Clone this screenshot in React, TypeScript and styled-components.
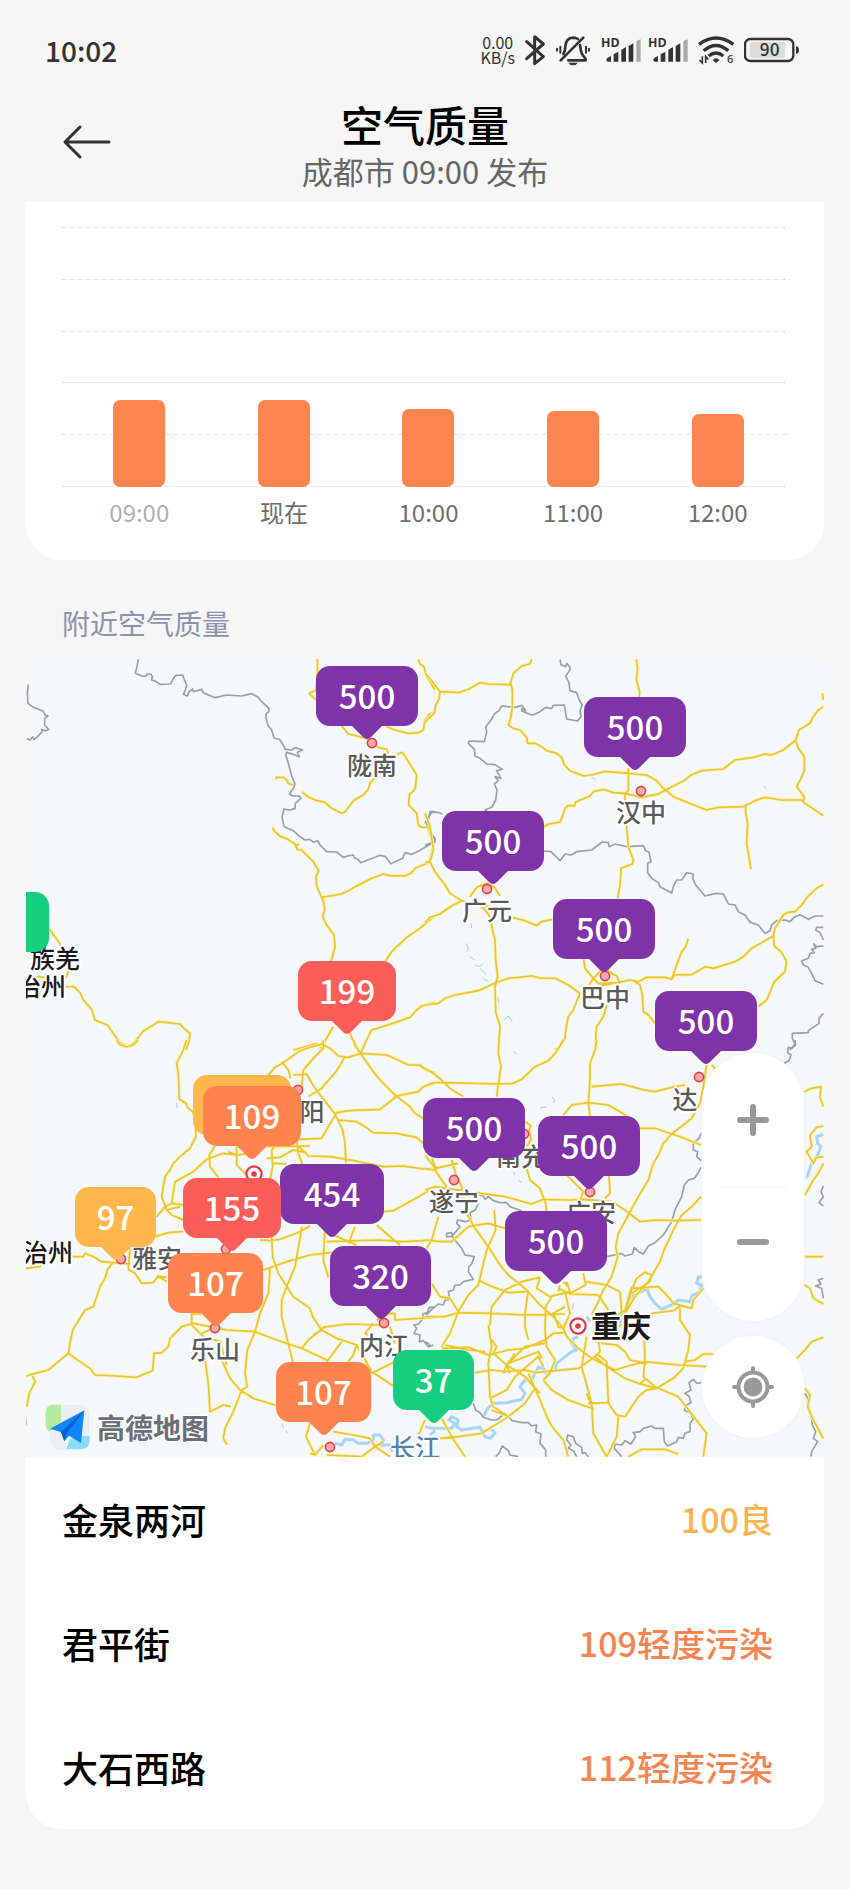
import React from "react";
import styled, { createGlobalStyle } from "styled-components";

const GlobalStyle = createGlobalStyle`
  *, *::before, *::after { box-sizing: border-box; }
  body {
    margin: 0;
    background: #f6f6f6;
    color: #000;
    font-family: "Noto Sans CJK SC", "Noto Sans", sans-serif;
  }
  h1, h2, p, ul { margin: 0; padding: 0; font-weight: inherit; }
  ul { list-style: none; }
  button { border: 0; padding: 0; background: none; font: inherit; cursor: pointer; }
`;

const Page = styled.div`
  min-height: 100vh;
  background: #f6f6f6;
`;

/* ---------- status bar ---------- */

const StatusBar = styled.div`
  display: flex;
  align-items: center;
  justify-content: space-between;
  height: 100px;
  padding: 0 50px 0 45px;
  color: #333;
`;

const Clock = styled.time`
  font-size: 28px;
  line-height: 32px;
  font-weight: 500;
`;

const StatusIcons = styled.div`
  display: flex;
  align-items: center;
  gap: 10px;
`;

const SignalPair = styled.div`
  display: flex;
  gap: 7px;
`;

const NetSpeed = styled.div`
  font-size: 16px;
  line-height: 15px;
  text-align: center;
`;

function Bluetooth() {
  return (
    <svg width="20" height="32" viewBox="298 101 60 96" aria-label="蓝牙">
      <path
        d="M303 124L353 169L327 190V109L353 131L303 175"
        fill="none" stroke="#333" strokeWidth="9" strokeLinejoin="round" strokeLinecap="round"
      />
    </svg>
  );
}

function BellOff() {
  return (
    <svg width="36" height="32" viewBox="392 101 108 96" aria-label="静音">
      <g fill="none" stroke="#333" strokeWidth="8" strokeLinecap="round">
        <path d="M409 180L477 112" />
        <path d="M417 161Q423 152 423 138Q425 113 446 112Q455 112 461 116" />
        <path d="M467 134Q469 152 473 161L484 176V180H432" strokeLinejoin="round" />
        <path d="M408 139V157M398 145V151M485 139V157M494 145V151" strokeWidth="6" />
      </g>
      <path d="M432 187H460Q456 195 446 195Q436 195 432 187Z" fill="#333" />
    </svg>
  );
}

function Signal() {
  return (
    <svg width="40" height="28" viewBox="525 108 120 84" aria-label="信号">
      <text x="525" y="141" fontSize="37" fontWeight="700" fontFamily="Open Sans, sans-serif" fill="#333">HD</text>
      <g fill="#333">
        <path d="M541 179Q541 174 555 168V185H547Q541 185 541 179Z" />
        <path d="M563 163L577 155V185H563Z" />
        <path d="M586 149L600 141V185H586Z" />
        <path d="M608 138L622 130V185H608Z" />
        <path d="M631 125Q631 122 644 118V185H631Z" fill="#aaa" />
      </g>
    </svg>
  );
}

function Wifi() {
  return (
    <svg width="36" height="32" viewBox="816 105 108 96" aria-label="无线网络">
      <g fill="none" stroke="#333" strokeWidth="10">
        <path d="M819 136Q870 98 922 136" />
        <path d="M833 155Q870 124 907 155" />
        <path d="M848 171Q870 153 892 171" />
      </g>
      <path d="M860 183Q870 173 881 183L870 192Z" fill="#333" />
      <path d="M829 172V192L820 183M839 192V172L847 181" fill="none" stroke="#333" strokeWidth="5" />
      <text x="903" y="193" fontSize="33" fontWeight="600" fontFamily="Open Sans, sans-serif" fill="#444">6</text>
    </svg>
  );
}

function Battery() {
  return (
    <svg width="56" height="26" viewBox="959 112 168 78" aria-label="电量">
      <rect x="962" y="118" width="145" height="66" rx="16" fill="none" stroke="#333" strokeWidth="7" />
      <rect x="976" y="127" width="106" height="48" rx="6" fill="#dcdcdc" />
      <path d="M1115 139Q1124 141 1124 151Q1124 161 1115 163Z" fill="#333" />
      <text x="1036" y="169" textAnchor="middle" fontSize="52" fontWeight="500" fontFamily="Noto Sans CJK SC, sans-serif" fill="#333">90</text>
    </svg>
  );
}

/* ---------- title ---------- */

const Header = styled.header`
  display: grid;
  grid-template-columns: 1fr auto 1fr;
  align-items: start;
  height: 102px;
  padding: 0 62px;
`;

const BackButton = styled.button`
  justify-self: start;
  display: flex;
  padding-top: 24px;
`;

const Titles = styled.div`
  text-align: center;
`;

const Title = styled.h1`
  font-size: 42px;
  line-height: 48px;
  font-weight: 500;
`;

const Published = styled.p`
  font-size: 31px;
  line-height: 46px;
  color: #666;
`;

/* ---------- forecast chart ---------- */

const Main = styled.main`
  padding: 0 26px 60px;
`;

const ChartCard = styled.section`
  padding: 25px 34px 32px 35px;
  background: #fff;
  border-radius: 0 0 36px 36px;
`;

const Plot = styled.div`
  display: grid;
`;

const GridLines = styled.div`
  grid-area: 1 / 1;
  display: flex;
  flex-direction: column;
  justify-content: space-between;
`;

const GridLine = styled.span`
  height: 1px;
  background: repeating-linear-gradient(90deg, #e2e2e2 0 5px, transparent 5px 8px);
`;

const Bars = styled.ul`
  grid-area: 1 / 1;
  display: grid;
  grid-template-columns: repeat(5, 1fr);
  align-items: end;
  justify-items: center;
  height: 260px;
  padding-left: 6px;
`;

const Bar = styled.li<{ $height: number }>`
  width: 52px;
  height: ${(p) => p.$height}px;
  border-radius: 7px;
  background: #ff8550;
`;

const Hours = styled.ul`
  display: grid;
  grid-template-columns: repeat(5, 1fr);
  padding: 9px 0 0 6px;
  text-align: center;
  font-size: 24px;
  line-height: 32px;
`;

const Hour = styled.li<{ $past?: boolean }>`
  color: ${(p) => (p.$past ? "#b0b0b0" : "#6e6e6e")};
`;

const SectionTitle = styled.h2`
  padding: 42px 36px 15px;
  font-size: 28px;
  line-height: 42px;
  color: #8c91ae;
`;

/* ---------- map ---------- */

const MAP_X = 26;
const MAP_Y = 659;
const MAP_SIZE = 798;
const pct = (v: number, origin: number) => `${((v - origin) / MAP_SIZE) * 100}%`;

const MapBox = styled.div`
  position: relative;
  aspect-ratio: 1;
  overflow: hidden;
  background: #f4f8fb;
`;

const MapSvg = styled.svg`
  display: block;
  width: 100%;
  height: 100%;
`;

const Place = styled.span<{ $x: number; $y: number; $kind?: Kind }>`
  position: absolute;
  left: ${(p) => pct(p.$x, MAP_X)};
  top: ${(p) => pct(p.$y, MAP_Y)};
  transform: translate(-50%, -50%);
  white-space: nowrap;
  font-size: ${(p) => (p.$kind === "big" ? 30 : 25)}px;
  line-height: 32px;
  font-weight: ${(p) => (p.$kind === "big" ? 700 : 500)};
  color: ${(p) => (p.$kind === "river" ? "#4f83b3" : p.$kind ? "#1a1a1a" : "#5a5a5a")};
  text-shadow: 2px 0 #fff, -2px 0 #fff, 0 2px #fff, 0 -2px #fff, 1px 1px #fff, -1px -1px #fff;
`;

const Pin = styled.button<{ $x: number; $y: number; $w: number; $color: string }>`
  position: absolute;
  left: ${(p) => pct(p.$x, MAP_X)};
  top: ${(p) => pct(p.$y, MAP_Y)};
  width: ${(p) => p.$w}px;
  height: 60px;
  border-radius: 14px;
  background: ${(p) => p.$color};
  color: #fff;
  font-size: 33px;
  line-height: 58px;
  padding-bottom: 2px;
  font-weight: 500;
  text-align: center;
`;

const PinTail = styled.svg`
  position: absolute;
  left: 50%;
  top: 59px;
  margin-left: -16px;
`;

const Controls = styled.div`
  position: absolute;
  right: 20px;
  bottom: 19px;
  display: flex;
  flex-direction: column;
  gap: 15px;
  width: 102px;
`;

const ZoomPill = styled.div`
  display: flex;
  flex-direction: column;
  align-items: center;
  padding: 0 0 26px;
  border-radius: 51px;
  background: #fff;
  box-shadow: 0 0 3px rgba(0, 0, 0, 0.05);
`;

const ZoomButton = styled.button`
  display: flex;
  align-items: center;
  justify-content: center;
  width: 68px;
  height: 108px;
  &:first-child {
    height: 134px;
  }
  & + & { border-top: 1px solid #f2f2f2; }
`;

const LocateButton = styled.button`
  display: flex;
  align-items: center;
  justify-content: center;
  height: 102px;
  border-radius: 50%;
  background: #fff;
  box-shadow: 0 0 3px rgba(0, 0, 0, 0.05);
`;

const Brand = styled.div`
  position: absolute;
  left: 19px;
  bottom: 7px;
  display: flex;
  align-items: center;
  gap: 6px;
  font-size: 28px;
  line-height: 44px;
  font-weight: 700;
  color: #6a7076;
  text-shadow: 1px 0 #fff, -1px 0 #fff, 0 1px #fff, 0 -1px #fff;
`;

/* Vector tiles: each covers a quadrant, drawn in thirds of a map unit. */
interface Tile {
  id: string;
  x: number;
  y: number;
  roads: string;
  borders: string;
  rivers: string;
  creeks?: string;
}

const TILES: Tile[] = [
  {
    id: "nw", x: 20, y: 650,
    roads: `M892 28L893 60L888 120L868 130L888 150M1195 28L1200 42L1212 50L1218 75L1245 120M1245 185L1228 193L1215 210L1210 240L1195 248L1165 250L1125 240L1100 230
      M965 228L985 252L1040 265L1075 292L1100 297L1105 312M1130 312L1148 308L1165 335L1190 375L1186 415L1168 435L1166 465L1190 490L1195 525L1205 532L1225 532L1232 560L1240 590L1230 620L1232 640L1245 668
      M766 388L770 382L790 382L800 390L804 400L820 406M846 426L860 438L885 450L915 457L935 475L965 490L975 486L1000 452L1030 435L1045 418L1050 400L1062 386
      M757 533L765 545L782 560L800 566L825 582L832 598L845 600L880 635L896 662L888 680L890 708L905 742L912 758L914 780L908 800L920 825L942 855L945 890L933 935
      M825 590L838 582M905 742L930 738L965 732L985 722L1010 708L1055 685L1090 672L1110 677L1155 678L1175 668L1185 655L1232 635M1095 935L1115 905L1160 862L1200 835L1245 797
      M88 838L105 860L122 885M146 960L138 985M50 980L78 982M138 1010L162 1010L180 1028L190 1050L215 1078L225 1110L262 1125L280 1150L300 1178L325 1191L345 1175L370 1143L400 1125L415 1115L480 1122L492 1135L510 1150L508 1170L498 1200
      M1245 1057L1205 1068L1190 1080L1170 1102L1110 1123L1055 1140L1025 1200M940 1130L905 1190L900 1200M990 1150L1000 1175L1015 1200M820 1200L885 1182L912 1185L930 1195`,
    borders: `M355 28L352 45L346 70L368 79L378 78L382 72L392 72L397 80L395 90L405 93L420 103L452 102L460 85L468 76L488 75L494 92L500 105L496 120L490 133L502 138L508 125L518 117L520 125L545 118L550 128L585 143L620 135L665 138L695 131L715 142L722 152L747 175L746 185L738 192L738 205L745 228L755 240L762 264L778 268L790 285L795 298L815 300L825 293L848 300L832 307L838 320L822 314L800 307L797 315L805 340L815 378L825 402L820 415L808 432L818 438L838 438L843 445L826 460L825 476L808 480L792 477L786 500L792 530L810 538L820 542L835 556L855 570L870 568L880 577L893 572L900 585L920 605L950 606L970 622L983 618L1000 615L1005 625L1014 628L1022 638L1080 616L1097 620L1112 641L1148 625L1155 608L1175 613L1195 604L1215 592L1245 575
      M25 103L22 130L24 160L40 172L70 184L75 195L84 198L74 205L74 225L86 238L76 243L65 238L66 246L50 262L42 268L38 261L30 270L20 266M1245 485L1230 485L1226 508L1218 512L1222 528L1232 545L1245 570`,
    rivers: "",
  },
  {
    id: "ne", x: 425, y: 650,
    roads: `M0 68L20 92L45 125L75 126L100 128L130 118L165 98L190 102L255 104L265 70L290 48L315 42L320 28M45 125L42 148L32 165L28 190L10 205L0 218
      M258 102L262 120L262 170L258 200L250 225L265 235L285 240L305 262L308 280L330 280L350 290L365 302L395 310L410 322L418 345L435 362L475 378L500 375L540 364L610 370L665 375L695 392L715 415L745 440L790 458L845 480L880 472L955 470L990 452L1020 442L1070 450L1130 450L1140 460L1195 497
      M634 28L638 55L634 90L644 125L642 145M610 355L610 420L600 432L600 450M604 525L608 560L610 590L625 630L622 642L588 655L586 700L578 745
      M355 532L372 522L405 516L412 500L420 475L430 466L448 468L452 456L495 438L505 425L535 418L565 428L600 430L650 442L700 432L780 390L800 374L830 362L895 357L910 345L930 330L985 322L1020 312L1040 315L1075 300L1112 270L1122 240L1155 220L1162 205L1178 182L1195 170
      M1112 273L1120 295L1138 320L1138 362L1128 385L1115 410L1138 440L1135 455M962 470L962 490L968 520L965 580L978 658
      M0 490L15 530L22 575L25 600L15 635L30 665L60 705L75 730L110 752L80 768L45 792L15 802L0 818M110 752L140 762L195 770M0 637L15 635
      M135 740L155 712L185 700L208 712L225 738M170 770L180 780L195 800L205 850L210 870L212 930L218 980L210 1010L212 1085L225 1130L220 1200M262 802L300 812L335 827L350 815L382 808
      M0 1065L40 1060L60 1045L90 1035L160 1022L215 997L250 985L320 978L345 984L390 985L430 1005L465 1030L445 1080L430 1100L425 1125L420 1165L405 1190L390 1200
      M476 928L480 955L505 985L490 1010M545 1065L535 1100L515 1130L512 1155L514 1200M530 960L505 985L520 1000L540 1000L580 998L615 990L640 995L665 982L722 982L740 988L748 975L800 974L840 950L865 955L930 935L955 920L980 895L1045 858L1050 835L1075 795L1085 788L1110 785L1130 765L1150 738L1175 715L1195 703
      M790 866L782 890L770 905L755 945L740 988M1045 858L1048 888L1068 905L1085 935L1080 965L1048 995L1040 1015L1025 1050L1000 1070M625 992L645 1005L652 1035L655 1085L670 1095L690 1120M545 960L575 978L585 1000M560 1002L500 1010M1192 130L1195 150`,
    borders: `M405 28L408 44L422 50L425 40L435 52L435 60L422 78L432 98L435 122L455 128L463 150L472 165L465 182L468 200L458 213L425 207L418 165L385 166L380 176L362 172L345 185L322 196L290 183L290 176L302 182L290 166L270 172L230 168L222 182L208 192L200 208L182 230L185 245L178 275L160 274L132 273L130 280L148 298L150 318L165 325L185 342L210 344L232 358L215 362L228 385L210 380L220 392L208 402L216 420L212 450L200 472L180 480L192 488
      M355 603L378 605L405 632L420 612L438 615L455 605L500 600L532 576L550 578L552 590L570 582L605 590L655 587L662 602L672 606L678 635L668 640L668 668L680 685L700 698L705 710L740 729L745 710L755 690L770 690L785 668L805 672L803 685L812 705L825 720L840 738L860 733L875 730L895 732L910 762L930 765L940 785L960 795L975 817L1000 825L1020 850L1035 842L1040 825L1055 812L1080 810L1095 815L1110 800L1125 794L1150 808L1170 798L1195 798
      M1195 832L1175 832L1172 840L1185 848L1195 870M1195 888L1175 890L1166 882L1172 895L1160 898L1168 908L1155 910L1150 925L1130 932L1135 945L1148 950L1160 970L1170 992L1195 1003M1195 1090L1182 1105L1182 1120L1168 1130L1150 1142L1150 1148L1102 1150L1102 1165L1110 1182L1095 1200M0 520L20 487L38 487L52 492M0 585L30 575L30 565L20 555`,
    rivers: "",
    creeks: "M138 820L140 835M125 880L130 900L126 905M135 920L150 930M150 945L165 950L175 940M165 955L185 975M175 985L190 995M218 1040L222 1060M238 1110L250 1098L262 1115M500 383L512 388M1018 408L1025 418",
  },
  {
    id: "sw", x: 20, y: 1040,
    roads: `M290 0L300 14L320 21L340 14L355 0M500 0L490 30L470 70L475 100L478 178L498 190L502 202L518 215L526 240L528 290L510 325L480 350L460 370L450 390L435 410L425 470L440 510L455 525L490 540
      M745 105L765 82L790 68L840 32L870 22L905 12L930 25L955 48L985 52L1022 40L1100 45L1145 65L1165 75L1200 75L1220 92L1245 98M910 0L910 25L880 55L850 90L845 145M1000 0L1005 15L1025 45L1060 95L1085 125L1125 165L1170 200L1185 220L1210 235
      M1040 0L1022 40M975 50L955 85L945 98L905 145L865 170M1245 130L1210 140L1195 155L1130 168L1110 185L1080 208L985 212L950 218L925 260L905 295L835 298M820 105L860 102L885 145L945 222L968 270L975 310L978 370M785 65L805 90L812 115
      M955 240L1010 245L1035 260L1060 278L1130 280L1190 292L1210 310M835 320L850 332L865 348L930 350L1000 362L1090 380L1150 378L1245 392M740 355L780 352L820 330L860 338M770 315L755 330L758 380L750 420M830 300L835 340L848 375M690 340L650 345M760 370L800 372M740 320L870 318
      M585 318L568 345L570 380L595 412M650 320L650 375L680 405M650 345L610 340L560 358L520 395L465 425L455 490L435 500L410 530M650 345L625 335M455 490L490 495M440 510L480 500M405 590L445 578L490 575M720 600L750 602L780 598L830 580L870 558
      M1090 515L1120 512L1200 468L1245 440M845 560L840 595L825 680L800 740L785 780L785 830L800 890L818 965M755 590L758 650L775 700L820 770L870 805L878 830L905 870L950 895L1010 915L1030 950L1055 995L1120 1038
      M1245 600L1150 605L1075 600L920 605M730 690L800 665L870 645L935 637M915 560L910 660L925 712M1005 560L985 612M1070 555L1110 590L1140 615M940 585L1010 615
      M325 688L345 700L365 730L400 728L415 708L440 725M415 708L440 712M155 650L190 650L195 640L220 650L245 665L330 672M330 625L325 688M18 685L60 680L65 675M280 665L262 690L255 715L240 740L220 800L195 810L158 870L150 910L145 940L180 965L210 985L225 1005L290 1008L350 1012L398 992L402 940L425 938L445 920L450 895L485 860L520 850L620 870L705 875L770 900L845 925L920 960M145 940L85 990L45 1000L18 1008M38 1008L45 1025L28 1060L20 1100
      M515 820L515 855L550 890M515 822L545 822M545 880L580 865M750 685L745 760L720 820L705 875L682 930L675 1000L682 1040L665 1050L640 1115L615 1165L610 1195L622 1215M545 895L555 960L565 1030L570 1115L610 1095L632 1100M605 960L630 1015L660 1050L700 1075L765 1095M550 890L600 905L620 975
      M845 925L865 900L890 880L910 862L980 852L1080 855M1060 850L1035 880L1070 900M1070 840L1110 820L1125 820L1125 840L1245 832M1010 915L1000 945L985 965M965 905L920 965M880 885L905 870M1110 860L1125 910M1055 1000L1125 965
      M870 1150L858 1190L885 1245L870 1240M940 1175L1000 1185L1050 1195L1065 1220L1110 1250M885 1245L910 1215M1215 1140L1195 1185M1065 1220L1025 1250L920 1245M1065 1220L1090 1205`,
    borders: "M1245 802L1228 802L1222 818L1208 822L1210 835L1195 852L1182 855L1190 865L1182 880L1200 885L1198 905L1210 902L1225 920L1240 915",
    rivers: "M945 1210L965 1215L975 1198L1000 1200L1015 1210L1042 1210L1060 1200L1060 1185L1080 1185L1090 1200L1085 1215L1110 1215L1118 1235M1230 1185L1245 1172",
    creeks: "M470 190L472 205M735 1085L745 1092L770 1098M785 1150L790 1165M798 1172L802 1180M18 1130L20 1155",
  },
  {
    id: "se", x: 425, y: 1040,
    roads: `M222 0L220 40L228 80L222 120L215 170M0 85L25 100L50 120L75 145L115 170M0 138L25 128L60 128L220 132L265 130L290 118L330 80L370 62L395 35L415 0M515 0L510 30L495 70L495 120L490 190L497 240M500 140L590 132L650 148L690 155L740 142L780 135
      M415 225L440 195L490 188L550 195L590 218L615 235M845 75L835 140L825 190L800 235L740 282L715 310L700 345L685 370L670 420L640 470L610 525L580 580L572 620L578 650L560 710L535 750L520 785L500 825M860 75L870 85
      M645 265L690 265L765 290L828 315M300 245L318 258L312 270L318 300L305 320M305 385L315 420L345 445L362 490L365 515M0 450L30 440L130 455L240 470L320 492L355 478L430 480L475 478L560 485L600 510L645 545L690 540L760 542L828 540
      M828 470L800 500L770 525L745 570L715 635L705 665L670 725L630 770L600 820M0 385L30 390L50 420L65 440M0 345L30 385L100 370M20 355L35 390M80 360L95 410L110 440L125 520L150 565L190 620L225 675L250 705L305 750L345 795L390 835L415 865
      M40 530L20 600L5 625M0 600L50 605L80 605L130 560L190 550L240 565M208 510L212 570L185 630L160 735L130 765L100 815L75 880L50 920M0 830L60 830L100 818L200 820L300 825L420 822M20 730L45 770L75 775L100 815
      M160 720L190 735L250 758L305 755M195 855L200 800L240 750L290 725L345 712M190 855L200 920L190 970L195 1070L205 1100L250 1130M380 770L362 800L360 870L365 920L390 960L375 1000M345 710L335 745L375 770L435 755L425 725
      M310 752L300 820L300 860L310 900M400 745L435 762L520 765L550 810M405 735L400 755M415 725L430 740M475 700L482 735L435 760M420 755L435 820L415 865L425 890L460 925M420 800L385 820L400 860L415 865M480 725L545 735L585 755L590 815
      M600 820L620 750L635 715L660 697L680 705L675 725L620 760M625 745L700 740L725 765L745 790L800 805L805 780L835 745M50 925L130 922L190 945L250 930L300 925L360 900L385 880L415 878M60 915L130 930L180 935
      M150 998L200 990L240 995L300 990L330 998L460 985L510 950L525 935L520 900M460 925L500 955L570 990L620 975L660 965L760 975L850 980M530 910L575 915L600 935L615 960L665 970M780 965L810 960L835 942L865 942M765 805L765 840L795 885L790 930L775 985L745 1015L695 1045L640 1030L600 1015L545 980L510 950
      M640 875L658 900L660 960L655 1010L690 1040L760 1070L795 1115L845 1180L835 1250M520 945L545 965L550 1090L575 1125L600 1130L640 1070L665 1050M645 1030L665 1015M695 1045L665 1050M580 1130L575 1190L545 1250M485 890L470 980L500 1090L505 1180L545 1250M485 1060L505 1110
      M355 1020L380 1050L430 1080L500 1105M375 1000L355 1020M310 1000L345 1080L370 1140L385 1165L415 1200L430 1250M195 1075L245 1050L270 1010L340 950L355 980M245 975L300 1010L345 1060M300 1010L330 1045L300 1090L250 1130L170 1180L100 1190L45 1195M50 1135L80 1190L120 1250
      M490 1090L555 1088M610 1250L650 1228L720 1228L760 1242M425 405L475 455L465 480M552 405L555 460L540 475M205 940L245 975L300 920L360 910M245 975L235 1000M205 940L215 920L200 900M240 1125L200 1110M250 970L340 935L350 955M270 940L245 975L255 1000M570 830L600 810L620 740M580 860L595 850
      M1138 155L1160 145L1188 140L1185 170L1195 200M1195 258L1175 262L1155 285L1160 320L1145 335L1165 370L1175 352L1195 350M1140 465L1165 420L1180 400L1195 370M1140 650L1195 650M1138 735L1155 745L1165 775L1195 792M1115 955L1140 930L1160 905L1195 892M1140 1045L1155 1065L1148 1100L1165 1140L1195 1195M680 820L745 812L770 795`,
    borders: `M828 280L822 295L805 310L805 330L818 335L815 350L828 362M828 382L820 398L808 415L790 420L778 435L770 470L750 510L740 545L715 585L690 608L670 618L655 642L640 635L628 622L622 642L600 648L590 640L545 650M1110 0L1112 15L1100 25L1090 22L1088 38L1098 45L1092 62L1078 70
      M160 465L175 468L180 478L190 470L205 482L225 488L245 488L255 500L290 512M160 490L150 510L135 518L138 540L122 545L98 540L95 550L105 560L95 572L80 590L65 590L65 580L80 578L85 595L110 625L120 645L148 650L140 672L132 680L130 695L145 718L115 725L105 735L90 735L85 750L70 755L75 780L60 780L55 795L40 792L20 808L0 830
      M145 1090L152 1110L165 1118L175 1132L200 1140L215 1140L240 1120L262 1142L290 1148L310 1148L320 1158L335 1155L332 1175L348 1182L345 1210L362 1230L362 1250M212 1250L222 1240L232 1218L250 1232L255 1245L280 1250M490 1250L480 1238L472 1240L470 1222L452 1210L445 1190L428 1185L425 1200L438 1215L430 1225L445 1232L455 1250
      M828 1028L815 1030L805 1018L792 1028L798 1050L780 1060L792 1068L798 1088L785 1095L778 1110L795 1118L805 1138L795 1150L795 1175L780 1180L775 1195L760 1192L755 1205L728 1218L718 1205L715 1165L690 1165L680 1158L655 1165L645 1175L625 1178L632 1190L618 1212L600 1202L590 1215L570 1212L568 1225L590 1250
      M1140 1060L1148 1075L1148 1100L1158 1120L1162 1155L1172 1175L1165 1195L1178 1205L1160 1235L1158 1250M1195 438L1188 455L1195 470L1182 488L1195 498M1195 715L1180 720L1188 732L1172 738L1190 745L1195 775M0 905L12 912L15 922`,
    rivers: "M0 1160L20 1165L80 1165L90 1150L72 1140L80 1130L100 1140L95 1160L110 1170L165 1162L180 1190L195 1195L210 1180L200 1168M175 1130L188 1105L205 1090L245 1088L290 1078L300 1060L285 1040L300 1020L320 1020L330 1000L340 982L355 985L365 1002L390 990L395 970L440 935L455 930L440 910L445 895L460 890M485 830L495 845M585 850L590 825L605 800L625 765L650 755L665 745L675 770L690 790L710 808L740 795L760 780L795 785L800 768L825 755L830 735L815 730L820 710L830 712M1195 283L1175 290L1178 310L1188 320L1178 345L1160 370L1145 415",
    creeks: "M345 205L365 200M380 170L390 180L385 190M265 395L270 405M280 420L290 428M265 35L275 42M445 790L442 810",
  },
];

const TOWNS: [number, number][] = [
  [372, 743], [641, 791], [487, 889], [605, 976], [699, 1077], [298, 1090], [524, 1134],
  [454, 1180], [590, 1192], [121, 1259], [226, 1249], [215, 1328], [384, 1323], [330, 1447],
];
const CAPITALS: [number, number][] = [[254, 1174], [578, 1326]];

type Kind = "dark" | "big" | "river";

const PLACES: { name: string; x: number; y: number; kind?: Kind }[] = [
  { name: "陇南", x: 372, y: 764 },
  { name: "汉中", x: 641, y: 811 },
  { name: "广元", x: 487, y: 909 },
  { name: "巴中", x: 605, y: 996 },
  { name: "达", x: 685, y: 1098 },
  { name: "阳", x: 312, y: 1110 },
  { name: "遂宁", x: 454, y: 1200 },
  { name: "南充", x: 521, y: 1155 },
  { name: "广安", x: 591, y: 1211 },
  { name: "雅安", x: 157, y: 1257 },
  { name: "乐山", x: 215, y: 1348 },
  { name: "内江", x: 384, y: 1344 },
  { name: "长江", x: 415, y: 1446, kind: "river" },
  { name: "族羌", x: 55, y: 957, kind: "dark" },
  { name: "治州", x: 41, y: 985, kind: "dark" },
  { name: "治州", x: 48, y: 1251, kind: "dark" },
  { name: "重庆", x: 621, y: 1324, kind: "big" },
];

const PURPLE = "#7e33a9";
const RED = "#fb5d58";
const ORANGE = "#fe834f";
const YELLOW = "#feb64d";
const GREEN = "#15ce80";

const PINS: { value: string; x: number; y: number; w: number; color: string }[] = [
  { value: "500", x: 316, y: 666, w: 102, color: PURPLE },
  { value: "500", x: 584, y: 697, w: 102, color: PURPLE },
  { value: "500", x: 442, y: 811, w: 102, color: PURPLE },
  { value: "500", x: 553, y: 899, w: 102, color: PURPLE },
  { value: "500", x: 655, y: 991, w: 102, color: PURPLE },
  { value: "", x: -32, y: 892, w: 81, color: GREEN },
  { value: "199", x: 298, y: 961, w: 98, color: RED },
  { value: "", x: 193, y: 1075, w: 98, color: YELLOW },
  { value: "109", x: 203, y: 1086, w: 98, color: ORANGE },
  { value: "454", x: 280, y: 1164, w: 104, color: PURPLE },
  { value: "97", x: 75, y: 1187, w: 81, color: YELLOW },
  { value: "155", x: 183, y: 1178, w: 98, color: RED },
  { value: "320", x: 330, y: 1246, w: 101, color: PURPLE },
  { value: "107", x: 168, y: 1253, w: 95, color: ORANGE },
  { value: "107", x: 276, y: 1362, w: 95, color: ORANGE },
  { value: "37", x: 393, y: 1350, w: 81, color: GREEN },
  { value: "500", x: 423, y: 1098, w: 102, color: PURPLE },
  { value: "500", x: 538, y: 1116, w: 102, color: PURPLE },
  { value: "500", x: 505, y: 1211, w: 102, color: PURPLE },
];

function BaseMap() {
  return (
    <MapSvg viewBox={`${MAP_X} ${MAP_Y} ${MAP_SIZE} ${MAP_SIZE}`} aria-hidden="true">
      {TILES.map((t) => (
        <g
          key={t.id}
          transform={`translate(${t.x} ${t.y}) scale(0.33333)`}
          fill="none"
          strokeLinejoin="round"
        >
          <path d={t.rivers} stroke="#a9d3f7" strokeWidth="9" />
          {t.creeks && <path d={t.creeks} stroke="#a5cbe8" strokeWidth="3" />}
          <path d={t.borders} stroke="#98a0a8" strokeWidth="5" />
          <path d={t.roads} stroke="#fcf0b4" strokeWidth="10" />
          <path d={t.roads} stroke="#e9c52e" strokeWidth="5" />
        </g>
      ))}
      {TOWNS.map(([x, y]) => (
        <circle key={`${x}-${y}`} cx={x} cy={y} r="4.6" fill="#ffa9a6" stroke="#dc4450" strokeWidth="1.6" />
      ))}
      {CAPITALS.map(([x, y]) => (
        <g key={`${x}-${y}`}>
          <circle cx={x} cy={y} r="7.6" fill="#fff" stroke="#e03c48" strokeWidth="2.2" />
          <circle cx={x} cy={y} r="2.8" fill="#e03c48" />
        </g>
      ))}
    </MapSvg>
  );
}

function BrandLogo() {
  return (
    <svg width="46" height="46" viewBox="76 1094 138 138" aria-hidden="true">
      <path d="M78 1120Q78 1096 102 1096H124V1150L88 1178Q78 1168 78 1150Z" fill="#b4eb9c" />
      <path d="M124 1096H180Q208 1098 208 1126V1190H140L124 1150Z" fill="#e9eef3" />
      <path d="M90 1180L130 1160L140 1232H110Q90 1220 90 1180Z" fill="#e6f0f6" />
      <path d="M178 1190H210V1204Q208 1230 180 1230H140L150 1200Z" fill="#8bdcfb" />
      <path d="M194 1113L91 1168L124 1178L134 1206L148 1189L184 1211Z" fill="#0f86f7" />
      <path d="M194 1113L124 1178L134 1206L140 1184Z" fill="#0a5fd0" />
    </svg>
  );
}

function AirMap() {
  return (
    <MapBox>
      <BaseMap />
      {PLACES.map((p) => (
        <Place key={`${p.name}-${p.y}`} $x={p.x} $y={p.y} $kind={p.kind}>{p.name}</Place>
      ))}
      {PINS.map((p) => (
        <Pin
          key={`${p.x}-${p.y}`}
          type="button"
          aria-label={`空气质量指数 ${p.value}`}
          $x={p.x} $y={p.y} $w={p.w} $color={p.color}
        >
          {p.value}
          <PinTail width="32" height="15" viewBox="0 0 32 15" aria-hidden="true">
            <path d="M0 0H32L20 12Q16 16 12 12Z" fill={p.color} />
          </PinTail>
        </Pin>
      ))}
      <Brand><BrandLogo />高德地图</Brand>
      <Controls>
        <ZoomPill>
          <ZoomButton type="button" aria-label="放大">
            <svg width="32" height="32" viewBox="0 0 32 32">
              <path d="M16 3V29M3 16H29" stroke="#999" strokeWidth="6" strokeLinecap="round" />
            </svg>
          </ZoomButton>
          <ZoomButton type="button" aria-label="缩小">
            <svg width="32" height="32" viewBox="0 0 32 32">
              <path d="M3 16H29" stroke="#999" strokeWidth="6" strokeLinecap="round" />
            </svg>
          </ZoomButton>
        </ZoomPill>
        <LocateButton type="button" aria-label="定位">
          <svg width="44" height="44" viewBox="0 0 44 44">
            <circle cx="22" cy="22" r="14.5" fill="none" stroke="#999" strokeWidth="4" />
            <circle cx="22" cy="22" r="9.4" fill="#999" />
            <path d="M22 3V7M22 37V41M3 22H7M37 22H41" stroke="#999" strokeWidth="4" strokeLinecap="round" />
          </svg>
        </LocateButton>
      </Controls>
    </MapBox>
  );
}

/* ---------- stations ---------- */

const StationList = styled.ul`
  background: #fff;
  border-radius: 0 0 36px 36px;
`;

const Station = styled.li`
  display: flex;
  align-items: center;
  justify-content: space-between;
  height: 124px;
  padding: 0 51px 0 36px;
`;

const StationName = styled.span`
  font-size: 36px;
  line-height: 50px;
  font-weight: 500;
`;

const StationValue = styled.span<{ $color: string }>`
  font-size: 34px;
  line-height: 50px;
  font-weight: 500;
  color: ${(p) => p.$color};
`;

const FORECAST = [
  { hour: "09:00", height: 87, past: true },
  { hour: "现在", height: 87 },
  { hour: "10:00", height: 78 },
  { hour: "11:00", height: 76 },
  { hour: "12:00", height: 73 },
];

const STATIONS = [
  { name: "金泉两河", value: "100良", color: "#f8b551" },
  { name: "君平街", value: "109轻度污染", color: "#f58552" },
  { name: "大石西路", value: "112轻度污染", color: "#f58552" },
];

export default function App() {
  return (
    <Page>
      <GlobalStyle />
      <StatusBar>
        <Clock>10:02</Clock>
        <StatusIcons>
          <NetSpeed>0.00<br />KB/s</NetSpeed>
          <Bluetooth />
          <BellOff />
          <SignalPair>
            <Signal />
            <Signal />
          </SignalPair>
          <Wifi />
          <Battery />
        </StatusIcons>
      </StatusBar>
      <Header>
        <BackButton type="button" aria-label="返回">
          <svg width="50" height="36" viewBox="0 0 50 36">
            <path
              d="M47 18H3M18 3L3 18L18 33"
              fill="none" stroke="#333" strokeWidth="3" strokeLinecap="round" strokeLinejoin="round"
            />
          </svg>
        </BackButton>
        <Titles>
          <Title>空气质量</Title>
          <Published>成都市 09:00 发布</Published>
        </Titles>
      </Header>
      <Main>
        <ChartCard>
          <Plot>
            <GridLines>
              {[0, 1, 2, 3, 4, 5].map((n) => <GridLine key={n} />)}
            </GridLines>
            <Bars>
              {FORECAST.map((f) => <Bar key={f.hour} $height={f.height} />)}
            </Bars>
          </Plot>
          <Hours>
            {FORECAST.map((f) => <Hour key={f.hour} $past={f.past}>{f.hour}</Hour>)}
          </Hours>
        </ChartCard>
        <SectionTitle>附近空气质量</SectionTitle>
        <AirMap />
        <StationList>
          {STATIONS.map((s) => (
            <Station key={s.name}>
              <StationName>{s.name}</StationName>
              <StationValue $color={s.color}>{s.value}</StationValue>
            </Station>
          ))}
        </StationList>
      </Main>
    </Page>
  );
}
